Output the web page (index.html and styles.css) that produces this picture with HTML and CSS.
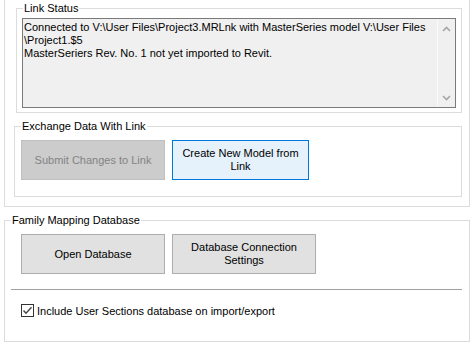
FILE: index.html
```html
<!DOCTYPE html>
<html lang="en">
<head>
    <meta charset="UTF-8">
    <meta name="viewport" content="width=device-width, initial-scale=1.0">
    <title>Link Settings</title>
    <link rel="stylesheet" href="styles.css">
</head>
<body>

    <div class="frame">
        <div class="group link-status">
            <span class="group-title">Link Status</span>
            <div class="status-box">
                <div class="status-text">
                    <div>Connected to V:\User Files\Project3.MRLnk with MasterSeries model V:\User Files</div>
                    <div>\Project1.$5</div>
                    <div>MasterSeriers Rev. No. 1 not yet imported to Revit.</div>
                </div>
                <div class="scrollbar">
                    <svg width="9" height="6" viewBox="0 0 9 6"><polyline points="1,5 4.5,1.5 8,5" fill="none" stroke="#a6a6a6" stroke-width="1.6"/></svg>
                    <svg width="9" height="6" viewBox="0 0 9 6"><polyline points="1,1 4.5,4.5 8,1" fill="none" stroke="#a6a6a6" stroke-width="1.6"/></svg>
                </div>
            </div>
        </div>

        <div class="group exchange">
            <span class="group-title">Exchange Data With Link</span>
            <div class="button-row">
                <button class="btn btn-disabled" disabled>Submit Changes to Link</button>
                <button class="btn btn-focus btn-narrow">Create New Model from<br>Link</button>
            </div>
        </div>
    </div>

    <div class="group family">
        <span class="group-title">Family Mapping Database</span>
        <div class="button-row">
            <button class="btn">Open Database</button>
            <button class="btn">Database Connection<br>Settings</button>
        </div>
        <div class="separator"></div>
        <label class="check-row">
            <span class="checkbox">
                <svg width="11" height="11" viewBox="0 0 11 11"><polyline points="1.5,5.5 4,8.2 9.5,2.2" fill="none" stroke="#444" stroke-width="1.4"/></svg>
            </span>
            Include User Sections database on import/export
        </label>
    </div>

</body>
</html>
```

FILE: styles.css
```css
body {
    margin: 0;
    font-family: "Liberation Sans", Arial, sans-serif;
    font-size: 11px;
    color: #000;
    background: #fff;
    overflow: hidden;
}
.frame {
    box-sizing: border-box;
    width: 466px;
    height: 227px;
    margin: -20px 0 0 4px;
    padding-top: 27px;
    border: 1px solid #dcdcdc;
}
.group {
    box-sizing: border-box;
    border: 1px solid #dcdcdc;
}
.group-title {
    display: block;
    width: max-content;
    height: 13px;
    margin: -7px 0 0 6px;
    padding: 0 1px;
    line-height: 13px;
    background: #fff;
}
.link-status {
    width: 446px;
    height: 105px;
    margin-left: 11px;
}
.status-box {
    box-sizing: border-box;
    display: flex;
    width: 434px;
    height: 90px;
    margin: 3px 0 0 5px;
    border: 1px solid #7a7a7a;
    background: #f0f0f0;
}
.status-text {
    flex: 1;
    padding: 2px 0 0 1px;
    line-height: 13px;
    white-space: nowrap;
    overflow: hidden;
}
.scrollbar {
    width: 17px;
    display: flex;
    flex-direction: column;
    justify-content: space-between;
    align-items: center;
    padding: 7px 0 6px;
    border-left: 1px solid #f9f9f9;
}
.exchange {
    width: 448px;
    height: 71px;
    margin: 13px 0 0 9px;
}
.button-row {
    display: flex;
    gap: 7px;
    margin: 7px 0 0 6px;
}
.family .button-row {
    margin-left: 16px;
}
.btn {
    box-sizing: border-box;
    width: 144px;
    height: 40px;
    padding: 0;
    font-family: inherit;
    font-size: 11px;
    line-height: 13px;
    color: #000;
    background: #e1e1e1;
    border: 1px solid #adadad;
}
.btn-narrow { width: 137px; }
.btn-focus { background: #e5f1fb; border-color: #0078d7; }
.btn-disabled { background: #cccccc; border-color: #bfbfbf; color: #838383; }
.family {
    width: 466px;
    height: 122px;
    margin: 13px 0 0 4px;
}
.separator {
    width: 451px;
    height: 1px;
    margin: 15px 0 0 6px;
    background: #a0a0a0;
}
.check-row {
    display: flex;
    align-items: center;
    gap: 3px;
    margin: 14px 0 0 16px;
}
.checkbox {
    box-sizing: border-box;
    display: flex;
    width: 13px;
    height: 13px;
    border: 1px solid #333;
    background: #fff;
}
```
